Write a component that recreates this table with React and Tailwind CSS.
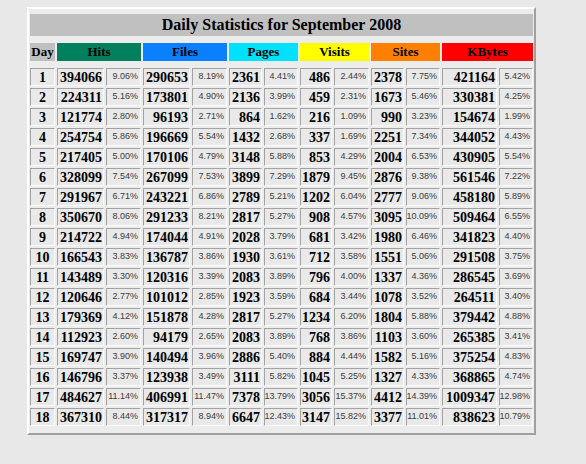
const rows = [
  [1, "394066", "9.06%", "290653", "8.19%", "2361", "4.41%", "486", "2.44%", "2378", "7.75%", "421164", "5.42%"],
  [2, "224311", "5.16%", "173801", "4.90%", "2136", "3.99%", "459", "2.31%", "1673", "5.46%", "330381", "4.25%"],
  [3, "121774", "2.80%", "96193", "2.71%", "864", "1.62%", "216", "1.09%", "990", "3.23%", "154674", "1.99%"],
  [4, "254754", "5.86%", "196669", "5.54%", "1432", "2.68%", "337", "1.69%", "2251", "7.34%", "344052", "4.43%"],
  [5, "217405", "5.00%", "170106", "4.79%", "3148", "5.88%", "853", "4.29%", "2004", "6.53%", "430905", "5.54%"],
  [6, "328099", "7.54%", "267099", "7.53%", "3899", "7.29%", "1879", "9.45%", "2876", "9.38%", "561546", "7.22%"],
  [7, "291967", "6.71%", "243221", "6.86%", "2789", "5.21%", "1202", "6.04%", "2777", "9.06%", "458180", "5.89%"],
  [8, "350670", "8.06%", "291233", "8.21%", "2817", "5.27%", "908", "4.57%", "3095", "10.09%", "509464", "6.55%"],
  [9, "214722", "4.94%", "174044", "4.91%", "2028", "3.79%", "681", "3.42%", "1980", "6.46%", "341823", "4.40%"],
  [10, "166543", "3.83%", "136787", "3.86%", "1930", "3.61%", "712", "3.58%", "1551", "5.06%", "291508", "3.75%"],
  [11, "143489", "3.30%", "120316", "3.39%", "2083", "3.89%", "796", "4.00%", "1337", "4.36%", "286545", "3.69%"],
  [12, "120646", "2.77%", "101012", "2.85%", "1923", "3.59%", "684", "3.44%", "1078", "3.52%", "264511", "3.40%"],
  [13, "179369", "4.12%", "151878", "4.28%", "2817", "5.27%", "1234", "6.20%", "1804", "5.88%", "379442", "4.88%"],
  [14, "112923", "2.60%", "94179", "2.65%", "2083", "3.89%", "768", "3.86%", "1103", "3.60%", "265385", "3.41%"],
  [15, "169747", "3.90%", "140494", "3.96%", "2886", "5.40%", "884", "4.44%", "1582", "5.16%", "375254", "4.83%"],
  [16, "146796", "3.37%", "123938", "3.49%", "3111", "5.82%", "1045", "5.25%", "1327", "4.33%", "368865", "4.74%"],
  [17, "484627", "11.14%", "406991", "11.47%", "7378", "13.79%", "3056", "15.37%", "4412", "14.39%", "1009347", "12.98%"],
  [18, "367310", "8.44%", "317317", "8.94%", "6647", "12.43%", "3147", "15.82%", "3377", "11.01%", "838623", "10.79%"],
];

const headers = [
  { label: "Hits", bg: "bg-[#00805c]" },
  { label: "Files", bg: "bg-[#0a80ff]" },
  { label: "Pages", bg: "bg-[#00e0ff]" },
  { label: "Visits", bg: "bg-[#ffff00]" },
  { label: "Sites", bg: "bg-[#ff8000]" },
  { label: "KBytes", bg: "bg-[#ff0000]" },
];

const cols =
  "grid grid-cols-[25px_47px_35px_47px_35px_33px_34px_32px_35px_33px_34px_55px_34px] gap-[2px]";

const cell =
  "h-[18px] bg-[#e9e9e9] border border-t-[#a3a3a3] border-l-[#a3a3a3] border-b-[#fbfbfb] border-r-[#fbfbfb] flex items-center";

export default function App() {
  return (
    <div className="min-h-[464px] bg-[#e8e8e8] pt-[7px] pl-[27px]">
      <div className="w-[509px] bg-[#ececec] border-2 border-t-white border-l-white border-b-[#a0a0a0] border-r-[#a0a0a0] pt-[5px] pb-[7px] px-px">
        <div className="h-[22px] bg-[#c0c0c0] flex items-center justify-center font-['Liberation_Serif',serif] font-bold text-[16px] text-black">
          Daily Statistics for September 2008
        </div>

        <div className={`${cols} mt-[7px] font-['Liberation_Serif',serif] font-bold text-[13px] text-black`}>
          <div className="h-[18px] bg-[#c0c0c0] flex items-center justify-center">Day</div>
          {headers.map((h) => (
            <div key={h.label} className={`col-span-2 h-[18px] ${h.bg} flex items-center justify-center`}>
              {h.label}
            </div>
          ))}
        </div>

        <div className={`${cols} mt-[7px]`}>
          {rows.map((r) =>
            r.map((v, i) => {
              if (i === 0) {
                return (
                  <div key={`${r[0]}-${i}`} className={`${cell} justify-center font-['Liberation_Serif',serif] font-bold text-[14px] text-black`}>
                    {v}
                  </div>
                );
              }
              if (i % 2 === 1) {
                return (
                  <div key={`${r[0]}-${i}`} className={`${cell} justify-end pr-px font-['Liberation_Serif',serif] font-bold text-[14px] text-black`}>
                    {v}
                  </div>
                );
              }
              return (
                <div key={`${r[0]}-${i}`} className={`${cell} justify-end pr-[2px] font-['Liberation_Sans',sans-serif] text-[9px] text-[#3a3a3a]`}>
                  {v}
                </div>
              );
            })
          )}
        </div>
      </div>
    </div>
  );
}
